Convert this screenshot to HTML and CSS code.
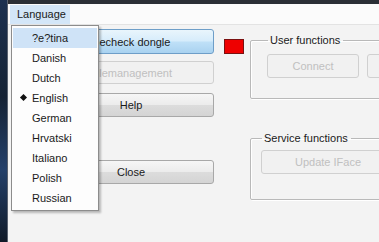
FILE: index.html
```html
<!DOCTYPE html>
<html lang="en">
<head>
    <meta charset="UTF-8">
    <title>Dongle Tool</title>
    <link rel="stylesheet" href="styles.css">
</head>
<body>
<div class="desktop">
    <div class="edge"></div>
    <div class="window">
        <div class="titlebar"></div>
        <div class="menubar">
            <span class="menu-item open">Language</span>
        </div>

        <div class="content">
            <div class="buttons">
                <button class="btn hot btn-recheck">Recheck dongle</button>
                <button class="btn btn-files" disabled>Filemanagement</button>
                <button class="btn btn-help">Help</button>
                <button class="btn btn-close">Close</button>
            </div>

            <div class="status"></div>

            <div class="groups">
                <fieldset class="group group-user">
                    <legend>User functions</legend>
                    <div class="group-row">
                        <button class="btn btn-connect" disabled>Connect</button>
                        <button class="btn btn-more" disabled aria-label="Disconnect"></button>
                    </div>
                </fieldset>
                <fieldset class="group group-service">
                    <legend>Service functions</legend>
                    <button class="btn btn-update" disabled>Update IFace</button>
                </fieldset>
            </div>
        </div>

        <!-- Language dropdown -->
        <ul class="dropdown">
            <li class="hover">?e?tina</li>
            <li>Danish</li>
            <li>Dutch</li>
            <li class="checked">English</li>
            <li>German</li>
            <li>Hrvatski</li>
            <li>Italiano</li>
            <li>Polish</li>
            <li>Russian</li>
        </ul>
    </div>
</div>
</body>
</html>
```

FILE: styles.css
```css
html, body {
  margin: 0;
  padding: 0;
  height: 100%;
  overflow: hidden;
}

body {
  font-family: "Liberation Sans", Arial, sans-serif;
  font-size: 11px;
  color: #1a1a1a;
}

.desktop {
  display: flex;
  height: 100%;
  background: #17263b;
}

.edge {
  width: 7px;
  flex-shrink: 0;
  background: linear-gradient(180deg, #1d3150 0%, #152234 40%, #24406a 70%, #101a28 100%);
  border-right: 1px solid #5a6270;
}

.window {
  position: relative;
  flex: 1;
  background: #f3f3f3;
  overflow: hidden;
}

.titlebar {
  height: 4px;
  background: #2b2f36;
}

.menubar {
  height: 20px;
  background: #fbfbfb;
  border-bottom: 1px solid #e3e3e3;
  padding-left: 2px;
}

.menu-item {
  display: inline-block;
  height: 19px;
  line-height: 19px;
  padding: 0 4px 0 7px;
  margin-top: 1px;
}

.menu-item.open {
  background: #d3e6f8;
}

/* main area */
.content {
  display: flex;
  align-items: flex-start;
  padding-left: 40px;
}

.buttons {
  display: flex;
  flex-direction: column;
  width: 166px;
  flex-shrink: 0;
}

.btn {
  font-family: inherit;
  font-size: 11px;
  height: 24px;
  padding: 0;
  color: #1a1a1a;
  border: 1px solid #a8a8a8;
  border-radius: 3px;
  background: linear-gradient(180deg, #f6f6f6 0%, #ececec 48%, #dcdcdc 52%, #d4d4d4 100%);
}

.btn.hot {
  border-color: #6e9ec8;
  background: linear-gradient(180deg, #e9f5fc 0%, #d6ecfb 48%, #bfe0f7 52%, #a9d2f0 100%);
}

.btn:disabled {
  color: #c0c0c0;
  border-color: #d0d0d0;
  background: #f1f1f1;
}

.btn-recheck {
  height: 25px;
  margin-top: 4px;
}

.btn-files {
  height: 23px;
  margin-top: 7px;
}

.btn-help {
  margin-top: 9px;
}

.btn-close {
  margin-top: 43px;
}

.status {
  width: 18px;
  height: 13px;
  flex-shrink: 0;
  margin: 14px 0 0 10px;
  background: #ee0000;
  border: 1px solid #7a1010;
}

.groups {
  display: flex;
  flex-direction: column;
  gap: 33px;
  margin-left: 6px;
  margin-top: 9px;
  width: 200px;
  flex-shrink: 0;
}

.group {
  box-sizing: border-box;
  margin: 0;
  border: 1px solid #b9b9b9;
  border-radius: 2px;
  box-shadow: inset 1px 1px 0 #fff, 1px 1px 0 #fff;
  font-size: 11px;
}

.group legend {
  padding: 0 3px 0 2px;
  margin-left: 1px;
  color: #1a1a1a;
}

.group-user {
  height: 65px;
  padding: 8px 0 0 16px;
}

.group-row {
  display: flex;
  gap: 8px;
}

.btn-connect {
  width: 92px;
  flex-shrink: 0;
}

.btn-more {
  width: 92px;
  flex-shrink: 0;
}

.group-service {
  height: 68px;
  padding: 6px 0 0 10px;
}

.btn-update {
  width: 134px;
}

/* dropdown menu */
.dropdown {
  position: absolute;
  left: 3px;
  top: 25px;
  width: 86px;
  margin: 0;
  padding: 2px 0;
  list-style-type: none;
  background: #fdfdfd;
  border: 1px solid #8c8c8c;
  box-shadow: 2px 2px 2px rgba(0, 0, 0, 0.25);
}

.dropdown li {
  position: relative;
  height: 20px;
  line-height: 20px;
  margin: 0 1px;
  padding-left: 19px;
  font-size: 11px;
}

.dropdown li.hover {
  background: #cfe3f7;
}

.dropdown li.checked::before {
  content: "";
  position: absolute;
  left: 8px;
  top: 7px;
  width: 5px;
  height: 5px;
  background: #111;
  transform: rotate(45deg);
}
```
